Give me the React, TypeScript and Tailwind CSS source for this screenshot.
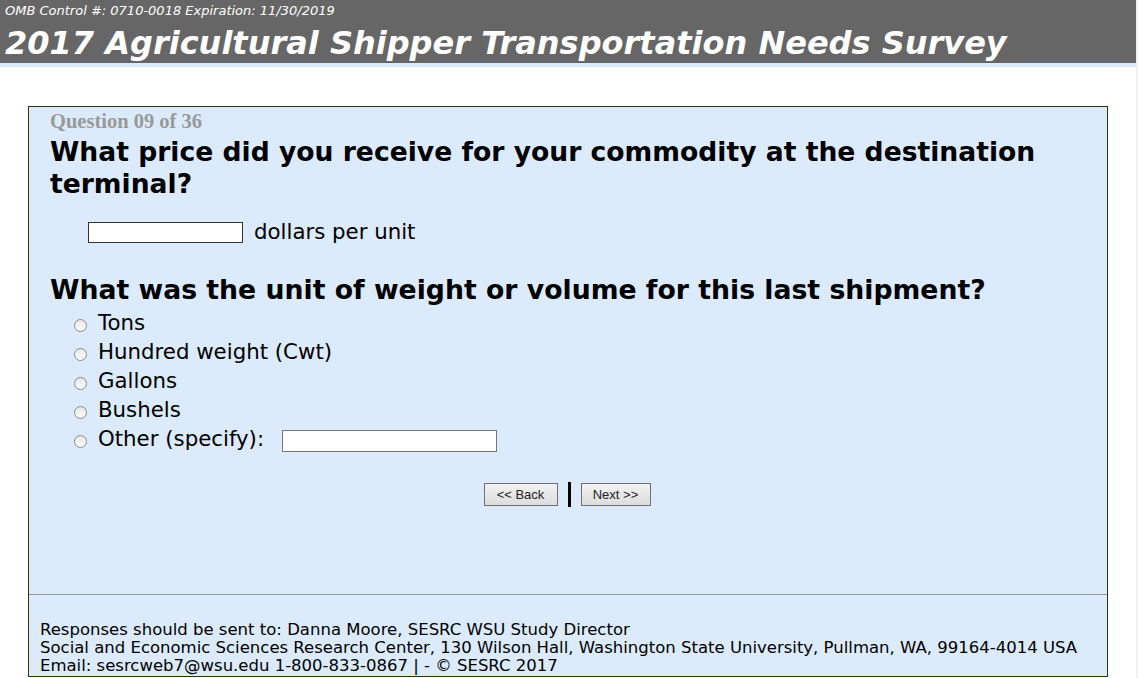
import React from "react";

const V = { fontFamily: '"DejaVu Sans", Verdana, sans-serif' };

function Radio() {
  return (
    <span className="inline-block w-[13px] h-[13px] rounded-full border border-[#8a8a8a] bg-gradient-to-b from-[#e6e6e6] to-white mr-[11px] mt-[9px] shrink-0" />
  );
}

export default function App() {
  const options = ["Tons", "Hundred weight (Cwt)", "Gallons", "Bushels"];
  return (
    <div className="flex w-[1138px] h-[678px] overflow-hidden bg-white" style={V}>
      <div className="w-[1136px] flex flex-col">
        <div className="h-[63px] bg-[#666666] text-white pl-[5px] pt-[3px]">
          <div className="text-[13px] italic leading-[15px]">OMB Control #: 0710-0018 Expiration: 11/30/2019</div>
          <div className="text-[32px] font-bold italic leading-[40px] mt-[5px]">
            2017 Agricultural Shipper Transportation Needs Survey
          </div>
        </div>
        <div className="h-[4px] bg-[#dcebfc]" />
        <div className="mt-[39px] mx-[28px] h-[571px] border border-[#333300] bg-[#dcebfc] flex flex-col">
          <div className="flex-1 pl-[21px] pt-[4px]">
            <div className="text-[20.5px] font-bold text-[#999999] leading-[21px]" style={{ fontFamily: '"Liberation Serif", Georgia, serif' }}>
              Question 09 of 36
            </div>
            <div className="text-[26.6px] font-bold text-black leading-[32px] mt-[4px] pr-[30px]">
              What price did you receive for your commodity at the destination terminal?
            </div>
            <div className="flex items-center mt-[20px] ml-[38px]">
              <span className="inline-block w-[155px] h-[21px] border border-[#333] bg-white" />
              <span className="text-[21.3px] ml-[11px] leading-[24px]">dollars per unit</span>
            </div>
            <div className="text-[26.7px] font-bold text-black leading-[32px] mt-[30px]">
              What was the unit of weight or volume for this last shipment?
            </div>
            <div className="ml-[24px] mt-[4px]">
              {options.map((o) => (
                <div key={o} className="flex items-start h-[29px]">
                  <Radio />
                  <span className="text-[21.3px] leading-[26px]">{o}</span>
                </div>
              ))}
              <div className="flex items-start h-[29px]">
                <Radio />
                <span className="text-[21.3px] leading-[26px]">Other (specify):</span>
                <span className="inline-block ml-[18px] mt-[4px] w-[215px] h-[22px] border border-[#777] bg-white" />
              </div>
            </div>
            <div className="flex justify-center items-center mt-[27px] pr-[23px]">
              <span className="flex items-center justify-center w-[74px] h-[23px] border border-[#707070] bg-gradient-to-b from-[#f2f2f2] to-[#dddddd] text-[13px] text-[#222]" style={{ fontFamily: '"Liberation Sans", Arial, sans-serif' }}>
                &lt;&lt; Back
              </span>
              <span className="inline-block w-[3px] h-[25px] bg-black mx-[10px]" />
              <span className="flex items-center justify-center w-[70px] h-[23px] border border-[#707070] bg-gradient-to-b from-[#f2f2f2] to-[#dddddd] text-[13px] text-[#222]" style={{ fontFamily: '"Liberation Sans", Arial, sans-serif' }}>
                Next &gt;&gt;
              </span>
            </div>
          </div>
          <div className="border-t border-[#999999] h-[82px] pl-[11px] pt-[26px] text-[16.5px] leading-[18px] text-black">
            <div>Responses should be sent to: Danna Moore, SESRC WSU Study Director</div>
            <div>Social and Economic Sciences Research Center, 130 Wilson Hall, Washington State University, Pullman, WA, 99164-4014 USA</div>
            <div>Email: sesrcweb7@wsu.edu 1-800-833-0867 | - © SESRC 2017</div>
          </div>
        </div>
      </div>
      <div className="w-[2px] bg-[#f0f0f0]" />
    </div>
  );
}
